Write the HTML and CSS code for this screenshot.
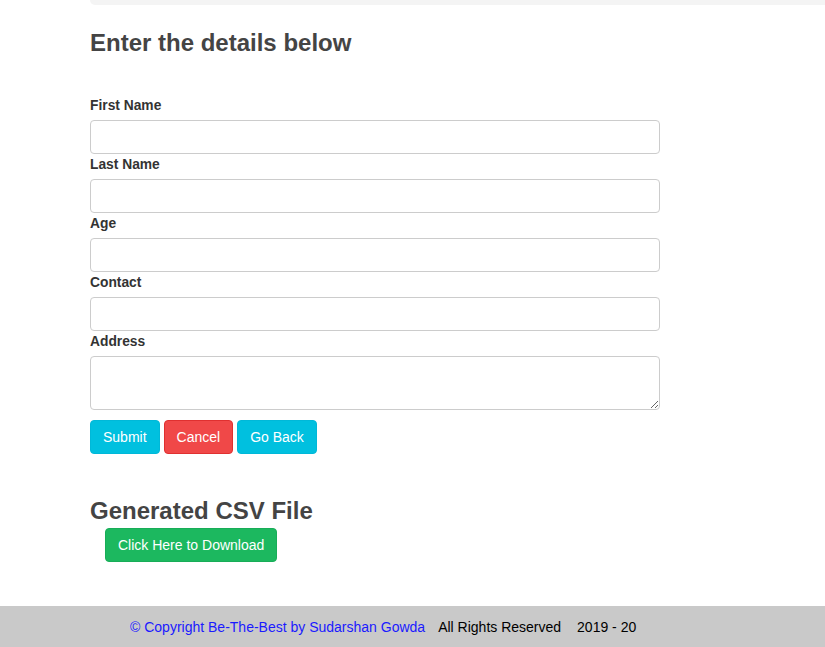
FILE: index.html
```html
<!DOCTYPE html>
<html>
<head>
<meta charset="utf-8">
<link rel="stylesheet" href="styles.css">
</head>
<body>
<div class="topbar"></div>
<main class="content">
  <h2 class="title">Enter the details below</h2>
  <form class="form">
    <label class="label">First Name</label>
    <input class="field" type="text">
    <label class="label">Last Name</label>
    <input class="field" type="text">
    <label class="label">Age</label>
    <input class="field" type="text">
    <label class="label">Contact</label>
    <input class="field" type="text">
    <label class="label">Address</label>
    <textarea class="field area"></textarea>
    <div class="actions">
      <button type="button" class="btn btn-info">Submit</button>
      <button type="button" class="btn btn-danger">Cancel</button>
      <button type="button" class="btn btn-info">Go Back</button>
    </div>
  </form>
  <h2 class="title csv">Generated CSV File</h2>
  <button type="button" class="btn btn-success download">Click Here to Download</button>
</main>
<footer class="footer">
  <span class="copy">© Copyright Be-The-Best by Sudarshan Gowda</span><span class="rights">All Rights Reserved</span><span class="year">2019 - 20</span>
</footer>
</body>
</html>
```

FILE: styles.css
```css
html, body {
  margin: 0;
  padding: 0;
  background: #fff;
  font-family: "Liberation Sans", Arial, sans-serif;
  color: #333;
}
.topbar {
  margin-left: 90px;
  height: 5px;
  background: #f4f4f4;
  border-bottom-left-radius: 5px;
}
.content {
  padding-left: 90px;
}
.title {
  margin: 25px 0 39px;
  font-size: 24px;
  line-height: 26px;
  font-weight: bold;
  color: #444;
}
.form {
  display: flex;
  flex-direction: column;
  width: 570px;
}
.label {
  display: block;
  font-size: 13.8px;
  font-weight: bold;
  line-height: 20px;
  padding-top: 1px;
  margin-bottom: 4px;
  color: #333;
}
.field {
  box-sizing: border-box;
  width: 570px;
  height: 34px;
  border: 1px solid #ccc;
  border-radius: 4px;
  padding: 6px 12px;
  font-family: inherit;
  font-size: 14px;
  margin: 0;
  background: #fff;
}
.area {
  height: 54px;
}
.actions {
  margin-top: 10px;
  display: flex;
  gap: 4px;
}
.btn {
  box-sizing: border-box;
  height: 34px;
  padding: 6px 12px;
  font-family: "Liberation Sans", Arial, sans-serif;
  font-size: 14px;
  line-height: 20px;
  color: #fff;
  border: 1px solid transparent;
  border-radius: 4px;
  cursor: pointer;
}
.btn-info {
  background: #00c0df;
  border-color: #00b8d8;
}
.btn-danger {
  background: #f04848;
  border-color: #e03030;
}
.btn-success {
  background: #1cb85f;
  border-color: #18ad58;
}
.csv {
  margin: 44px 0 4px;
}
.download {
  margin-left: 15px;
  display: block;
}
.footer {
  margin-top: 44px;
  height: 41px;
  background: #c9c9c9;
  display: flex;
  align-items: center;
  padding-left: 130px;
  font-size: 14px;
  color: #000;
}
.copy {
  color: #1a1aff;
}
.rights {
  margin-left: 13px;
}
.year {
  margin-left: 16px;
}
```
